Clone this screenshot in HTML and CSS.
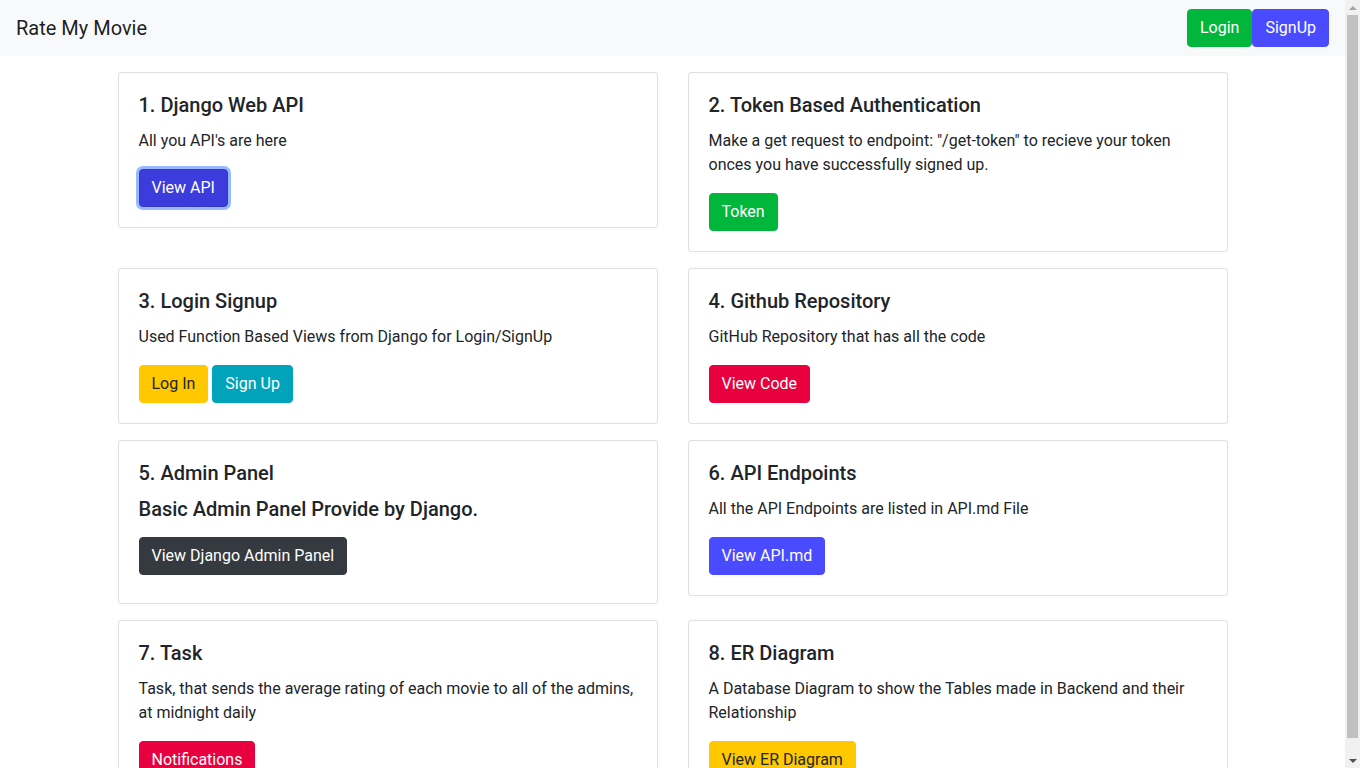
FILE: index.html
```html
<!DOCTYPE html>
<html lang="en">
<head>
<meta charset="utf-8">
<title>Rate My Movie</title>
<link rel="stylesheet" href="styles.css">
</head>
<body>
<div class="page">
  <nav class="navbar">
    <a class="brand" href="#">Rate My Movie</a>
    <div class="nav-actions">
      <a class="btn btn-success" href="#">Login</a><a class="btn btn-primary" href="#">SignUp</a>
    </div>
  </nav>
  <main class="container">
    <div class="grid">
      <div class="card">
        <h5 class="card-title">1. Django Web API</h5>
        <p class="card-text">All you API's are here</p>
        <div class="actions"><a class="btn btn-primary-focus" href="#">View API</a></div>
      </div>
      <div class="card">
        <h5 class="card-title">2. Token Based Authentication</h5>
        <p class="card-text">Make a get request to endpoint: "/get-token" to recieve your token onces you have successfully signed up.</p>
        <div class="actions"><a class="btn btn-success" href="#">Token</a></div>
      </div>
      <div class="card">
        <h5 class="card-title">3. Login Signup</h5>
        <p class="card-text">Used Function Based Views from Django for Login/SignUp</p>
        <div class="actions"><a class="btn btn-warning" href="#">Log In</a> <a class="btn btn-info" href="#">Sign Up</a></div>
      </div>
      <div class="card">
        <h5 class="card-title">4. Github Repository</h5>
        <p class="card-text">GitHub Repository that has all the code</p>
        <div class="actions"><a class="btn btn-danger" href="#">View Code</a></div>
      </div>
      <div class="card">
        <h5 class="card-title">5. Admin Panel</h5>
        <h5 class="card-subtitle">Basic Admin Panel Provide by Django.</h5>
        <div class="actions actions-extra"><a class="btn btn-dark" href="#">View Django Admin Panel</a></div>
      </div>
      <div class="card">
        <h5 class="card-title">6. API Endpoints</h5>
        <p class="card-text">All the API Endpoints are listed in API.md File</p>
        <div class="actions"><a class="btn btn-primary" href="#">View API.md</a></div>
      </div>
      <div class="card">
        <h5 class="card-title">7. Task</h5>
        <p class="card-text">Task, that sends the average rating of each movie to all of the admins, at midnight daily</p>
        <div class="actions"><a class="btn btn-danger" href="#">Notifications</a></div>
      </div>
      <div class="card">
        <h5 class="card-title">8. ER Diagram</h5>
        <p class="card-text">A Database Diagram to show the Tables made in Backend and their Relationship</p>
        <div class="actions"><a class="btn btn-warning" href="#">View ER Diagram</a></div>
      </div>
    </div>
  </main>
</div>
<div class="scrollbar" aria-hidden="true">
  <div class="sb-btn"><span class="arrow-up"></span></div>
  <div class="sb-track"><div class="sb-thumb"></div></div>
  <div class="sb-btn"><span class="arrow-down"></span></div>
</div>
</body>
</html>
```
FILE: styles.css
```css
* { box-sizing: border-box; }
html, body { height: 100%; }
body {
  margin: 0;
  display: flex;
  overflow: hidden;
  font-family: Roboto, "Liberation Sans", sans-serif;
  font-size: 16px;
  line-height: 1.5;
  color: #212529;
  background: #fff;
}
.page {
  flex: 1;
  min-width: 0;
}
.scrollbar {
  width: 15px;
  flex: 0 0 15px;
  height: 100vh;
  display: flex;
  flex-direction: column;
  background: #f1f1f1;
}
.sb-btn {
  height: 15px;
  display: flex;
  align-items: center;
  justify-content: center;
}
.arrow-up, .arrow-down {
  width: 0;
  height: 0;
  border-left: 4px solid transparent;
  border-right: 4px solid transparent;
}
.arrow-up { border-bottom: 4px solid #a3a3a3; }
.arrow-down { border-top: 4px solid #505050; }
.sb-track {
  flex: 1;
  padding: 0 2px 15px;
}
.sb-thumb {
  height: 100%;
  background: #c1c1c1;
}
.navbar {
  display: flex;
  align-items: center;
  justify-content: space-between;
  height: 56px;
  padding: 8px 16px;
  background: #f8f9fa;
}
.brand {
  font-size: 20px;
  line-height: 30px;
  color: rgba(0,0,0,.9);
  text-decoration: none;
}
.nav-actions { display: flex; }
.container {
  width: 1140px;
  margin: 0 auto;
  padding: 0 15px;
}
.grid {
  display: grid;
  grid-template-columns: 1fr 1fr;
  column-gap: 30px;
  align-items: start;
  padding-bottom: 16px;
}
.card {
  margin-top: 16px;
  border: 1px solid rgba(0,0,0,.125);
  border-radius: 4px;
  padding: 20px;
  background: #fff;
}
.card-title, .card-subtitle {
  margin: 0 0 12px;
  font-size: 20px;
  font-weight: 500;
  line-height: 1.2;
}
.card-subtitle { margin-bottom: 16px; }
.card-text { margin: 0 0 16px; }
.actions { display: block; }
.actions-extra { padding-bottom: 8px; }
.btn {
  display: inline-block;
  padding: 6px 12px;
  border: 1px solid transparent;
  border-radius: 4px;
  font-size: 16px;
  line-height: 24px;
  text-decoration: none;
  color: #fff;
  vertical-align: middle;
}
.btn-success { background: #00b73c; border-color: #00b73c; }
.btn-primary { background: #4a4aff; border-color: #4a4aff; }
.btn-primary-focus {
  background: #3c3cdc;
  border-color: #3636d0;
  box-shadow: 0 0 0 3px rgba(120,160,255,.75);
}
.btn-warning { background: #ffc800; border-color: #ffc800; color: #212529; }
.btn-info { background: #00a3b9; border-color: #00a3b9; }
.btn-danger { background: #e9003e; border-color: #e9003e; }
.btn-dark { background: #343a40; border-color: #343a40; }
```
